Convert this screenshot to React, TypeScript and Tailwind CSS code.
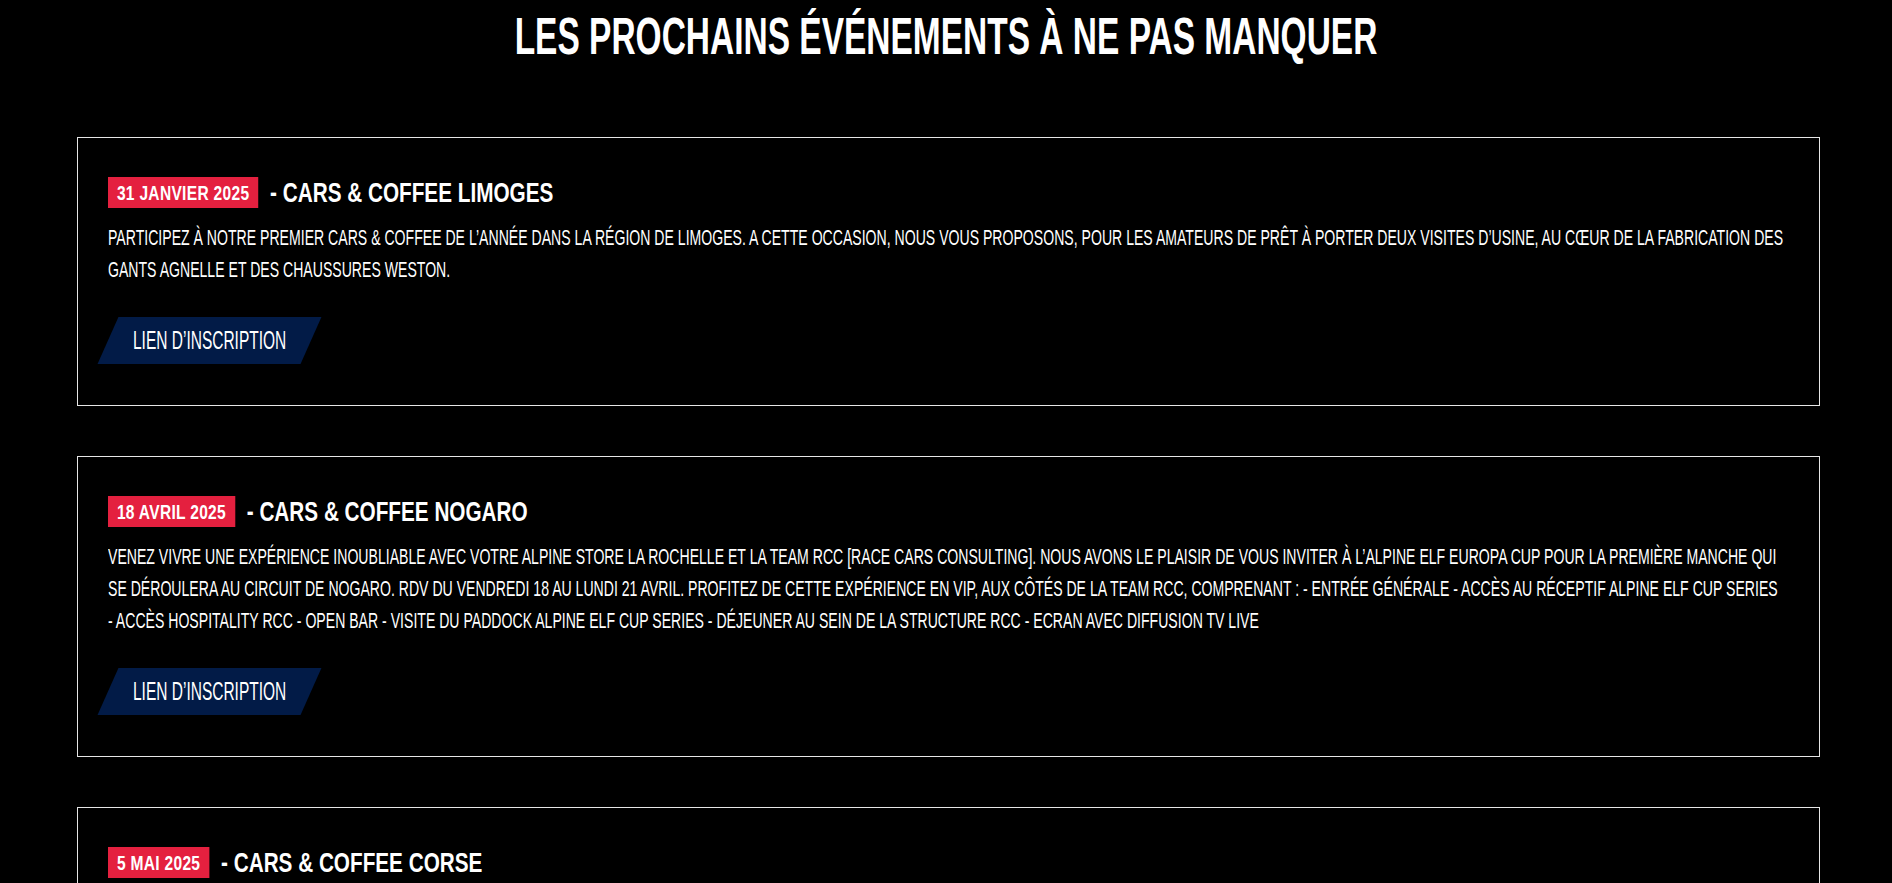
import React from "react";

const events = [
  {
    date: "31 JANVIER 2025",
    title: "CARS & COFFEE LIMOGES",
    lines: [
      "PARTICIPEZ À NOTRE PREMIER CARS & COFFEE DE L’ANNÉE DANS LA RÉGION DE LIMOGES. A CETTE OCCASION, NOUS VOUS PROPOSONS, POUR LES AMATEURS DE PRÊT À PORTER DEUX VISITES D’USINE, AU CŒUR DE LA FABRICATION DES",
      "GANTS AGNELLE ET DES CHAUSSURES WESTON.",
    ],
  },
  {
    date: "18 AVRIL 2025",
    title: "CARS & COFFEE NOGARO",
    lines: [
      "VENEZ VIVRE UNE EXPÉRIENCE INOUBLIABLE AVEC VOTRE ALPINE STORE LA ROCHELLE ET LA TEAM RCC [RACE CARS CONSULTING]. NOUS AVONS LE PLAISIR DE VOUS INVITER À L’ALPINE ELF EUROPA CUP POUR LA PREMIÈRE MANCHE QUI",
      "SE DÉROULERA AU CIRCUIT DE NOGARO. RDV DU VENDREDI 18 AU LUNDI 21 AVRIL. PROFITEZ DE CETTE EXPÉRIENCE EN VIP, AUX CÔTÉS DE LA TEAM RCC, COMPRENANT : - ENTRÉE GÉNÉRALE - ACCÈS AU RÉCEPTIF ALPINE ELF CUP SERIES",
      "- ACCÈS HOSPITALITY RCC - OPEN BAR - VISITE DU PADDOCK ALPINE ELF CUP SERIES - DÉJEUNER AU SEIN DE LA STRUCTURE RCC - ECRAN AVEC DIFFUSION TV LIVE",
    ],
  },
  {
    date: "5 MAI 2025",
    title: "CARS & COFFEE CORSE",
    lines: ["RENDEZ-VOUS EN CORSE POUR UN CARS & COFFEE EXCEPTIONNEL AU CŒUR DE L’ÎLE DE BEAUTÉ."],
  },
];

// condensed display face: Liberation Sans squeezed horizontally
const font = "font-['Liberation_Sans',Arial,sans-serif]";

const EventCard = ({ date, title, lines }: { date: string; title: string; lines: string[] }) => {
  return (
    <div className="border border-[#e6e6e6] px-[30px] pt-[39px] pb-[41px]">
      <div className="flex origin-left scale-x-[0.74] items-center gap-[16px] whitespace-nowrap">
        <span className="flex h-[31px] items-center bg-[#e4203f] px-[12px] text-[21px] font-bold leading-none tracking-[0.02em]">
          {date}
        </span>
        <h3 className="text-[28px] font-bold leading-none">- {title}</h3>
      </div>
      <p className="mt-[14px] origin-left scale-x-[0.64] text-[22px] leading-[32px]">
        {lines.map((line) => (
          <span key={line} className="block whitespace-nowrap">
            {line}
          </span>
        ))}
      </p>
      <a
        href="#"
        className="mt-[31px] flex h-[47px] w-[203px] -skew-x-[24deg] items-center justify-center bg-[#021b47]"
      >
        <span className="block skew-x-[24deg]">
          <span className="block scale-x-[0.62] whitespace-nowrap text-[25px] leading-none">
            LIEN D’INSCRIPTION
          </span>
        </span>
      </a>
    </div>
  );
};

export default function App() {
  return (
    <div className={`min-h-screen overflow-hidden bg-black text-white ${font}`}>
      <h2 className="scale-x-[0.644] pt-[10px] text-center text-[52px] font-bold leading-none">
        LES PROCHAINS ÉVÉNEMENTS À NE PAS MANQUER
      </h2>
      <div className="mt-[75px] flex flex-col gap-[50px] pl-[77px] pr-[72px] pb-10">
        {events.map((e) => (
          <EventCard key={e.date} {...e} />
        ))}
      </div>
    </div>
  );
}
